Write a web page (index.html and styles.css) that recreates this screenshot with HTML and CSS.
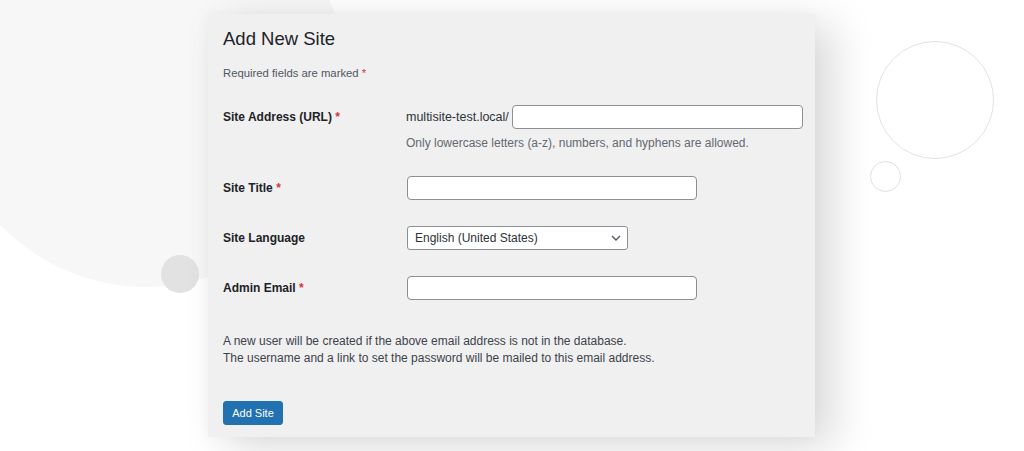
FILE: index.html
```html
<!DOCTYPE html>
<html lang="en">
<head>
<meta charset="utf-8">
<title>Add New Site</title>
<link rel="stylesheet" href="styles.css">
</head>
<body>
<div class="deco deco-big"></div>
<div class="deco deco-dot"></div>
<div class="deco deco-ring-lg"></div>
<div class="deco deco-ring-sm"></div>

<div class="card">
  <h1 class="title">Add New Site</h1>
  <p class="required">Required fields are marked <span class="req">*</span></p>

  <div class="form">
    <div class="row">
      <label class="label">Site Address (URL) <span class="req">*</span></label>
      <div class="field">
        <div class="url-line">
          <span class="prefix">multisite-test.local/</span>
          <input class="input input-url" type="text">
        </div>
        <p class="help">Only lowercase letters (a-z), numbers, and hyphens are allowed.</p>
      </div>
    </div>

    <div class="row">
      <label class="label">Site Title <span class="req">*</span></label>
      <div class="field"><input class="input input-reg" type="text"></div>
    </div>

    <div class="row">
      <label class="label">Site Language</label>
      <div class="field">
        <div class="select">
          <span>English (United States)</span>
          <svg class="chev" width="10" height="6" viewBox="0 0 10 6"><path d="M1 1l4 4 4-4" fill="none" stroke="#50575e" stroke-width="1.4"/></svg>
        </div>
      </div>
    </div>

    <div class="row">
      <label class="label">Admin Email <span class="req">*</span></label>
      <div class="field"><input class="input input-reg" type="text"></div>
    </div>
  </div>

  <p class="note">A new user will be created if the above email address is not in the database.<br>The username and a link to set the password will be mailed to this email address.</p>

  <button class="btn" type="button">Add Site</button>
</div>
</body>
</html>
```

FILE: styles.css
```css
html, body {
  margin: 0;
  padding: 0;
  background: #ffffff;
  width: 1024px;
  height: 451px;
  overflow: hidden;
  position: relative;
  font-family: "Liberation Sans", Arial, sans-serif;
  color: #1d2327;
}

.deco {
  position: absolute;
  border-radius: 50%;
}
.deco-big {
  left: -56px;
  top: -117px;
  width: 404px;
  height: 404px;
  background: #f7f7f8;
}
.deco-dot {
  left: 161px;
  top: 255px;
  width: 38px;
  height: 38px;
  background: #e2e2e3;
}
.deco-ring-lg {
  left: 876px;
  top: 41px;
  width: 118px;
  height: 118px;
  border: 1px solid #e2e2e4;
  box-sizing: border-box;
}
.deco-ring-sm {
  left: 870px;
  top: 161px;
  width: 31px;
  height: 31px;
  border: 1px solid #e2e2e4;
  box-sizing: border-box;
}

.card {
  position: relative;
  margin: 14px 0 0 208px;
  width: 607px;
  height: 423px;
  box-sizing: border-box;
  padding: 13px 15px 0 15px;
  background: #f0f0f1;
  box-shadow: 18px 10px 40px rgba(0, 0, 0, 0.15), -2px 0 12px rgba(0, 0, 0, 0.03);
}

.title {
  margin: 0;
  font-size: 18.5px;
  line-height: 24px;
  font-weight: 400;
  color: #1d2327;
}

.required {
  margin: 14px 0 0 0;
  font-size: 11.3px;
  line-height: 16px;
  color: #50575e;
}

.req {
  color: #d63638;
}

.form {
  margin-top: 24px;
  display: flex;
  flex-direction: column;
}

.row {
  display: flex;
  align-items: flex-start;
}
.row + .row {
  margin-top: 26px;
}
.row:nth-child(2) { margin-top: 25px; }

.label {
  width: 183px;
  flex: none;
  font-size: 12px;
  font-weight: 700;
  line-height: 24px;
  color: #1d2327;
}

.field {
  flex: none;
  display: flex;
  flex-direction: column;
}

.url-line {
  display: flex;
  align-items: center;
  gap: 3px;
  white-space: nowrap;
}

.prefix {
  flex: none;
  font-size: 12.5px;
  line-height: 24px;
  color: #2c3338;
}

.input {
  flex: none;
  box-sizing: border-box;
  height: 24px;
  border: 1px solid #8c8f94;
  border-radius: 4px;
  background: #ffffff;
  margin: 0;
  padding: 0 6px;
}
.input-url { width: 291px; }
.input-reg { width: 290px; margin-left: 1px; }

.help {
  margin: 6px 0 0 0;
  font-size: 12px;
  line-height: 16px;
  color: #646970;
  white-space: nowrap;
}

.select {
  box-sizing: border-box;
  width: 221px;
  height: 24px;
  margin-left: 1px;
  border: 1px solid #8c8f94;
  border-radius: 3px;
  background: #ffffff;
  display: flex;
  align-items: center;
  justify-content: space-between;
  padding: 0 6px 0 7px;
  font-size: 12px;
  color: #2c3338;
}
.chev { display: block; }

.note {
  margin: 33px 0 0 0;
  font-size: 12px;
  line-height: 17px;
  color: #3c434a;
}

.btn {
  display: block;
  margin-top: 34px;
  height: 24px;
  width: 60px;
  padding: 0;
  border: 1px solid #2271b1;
  border-radius: 3px;
  background: #2271b1;
  color: #ffffff;
  font-family: "Liberation Sans", Arial, sans-serif;
  font-size: 11px;
  line-height: 22px;
}
```
